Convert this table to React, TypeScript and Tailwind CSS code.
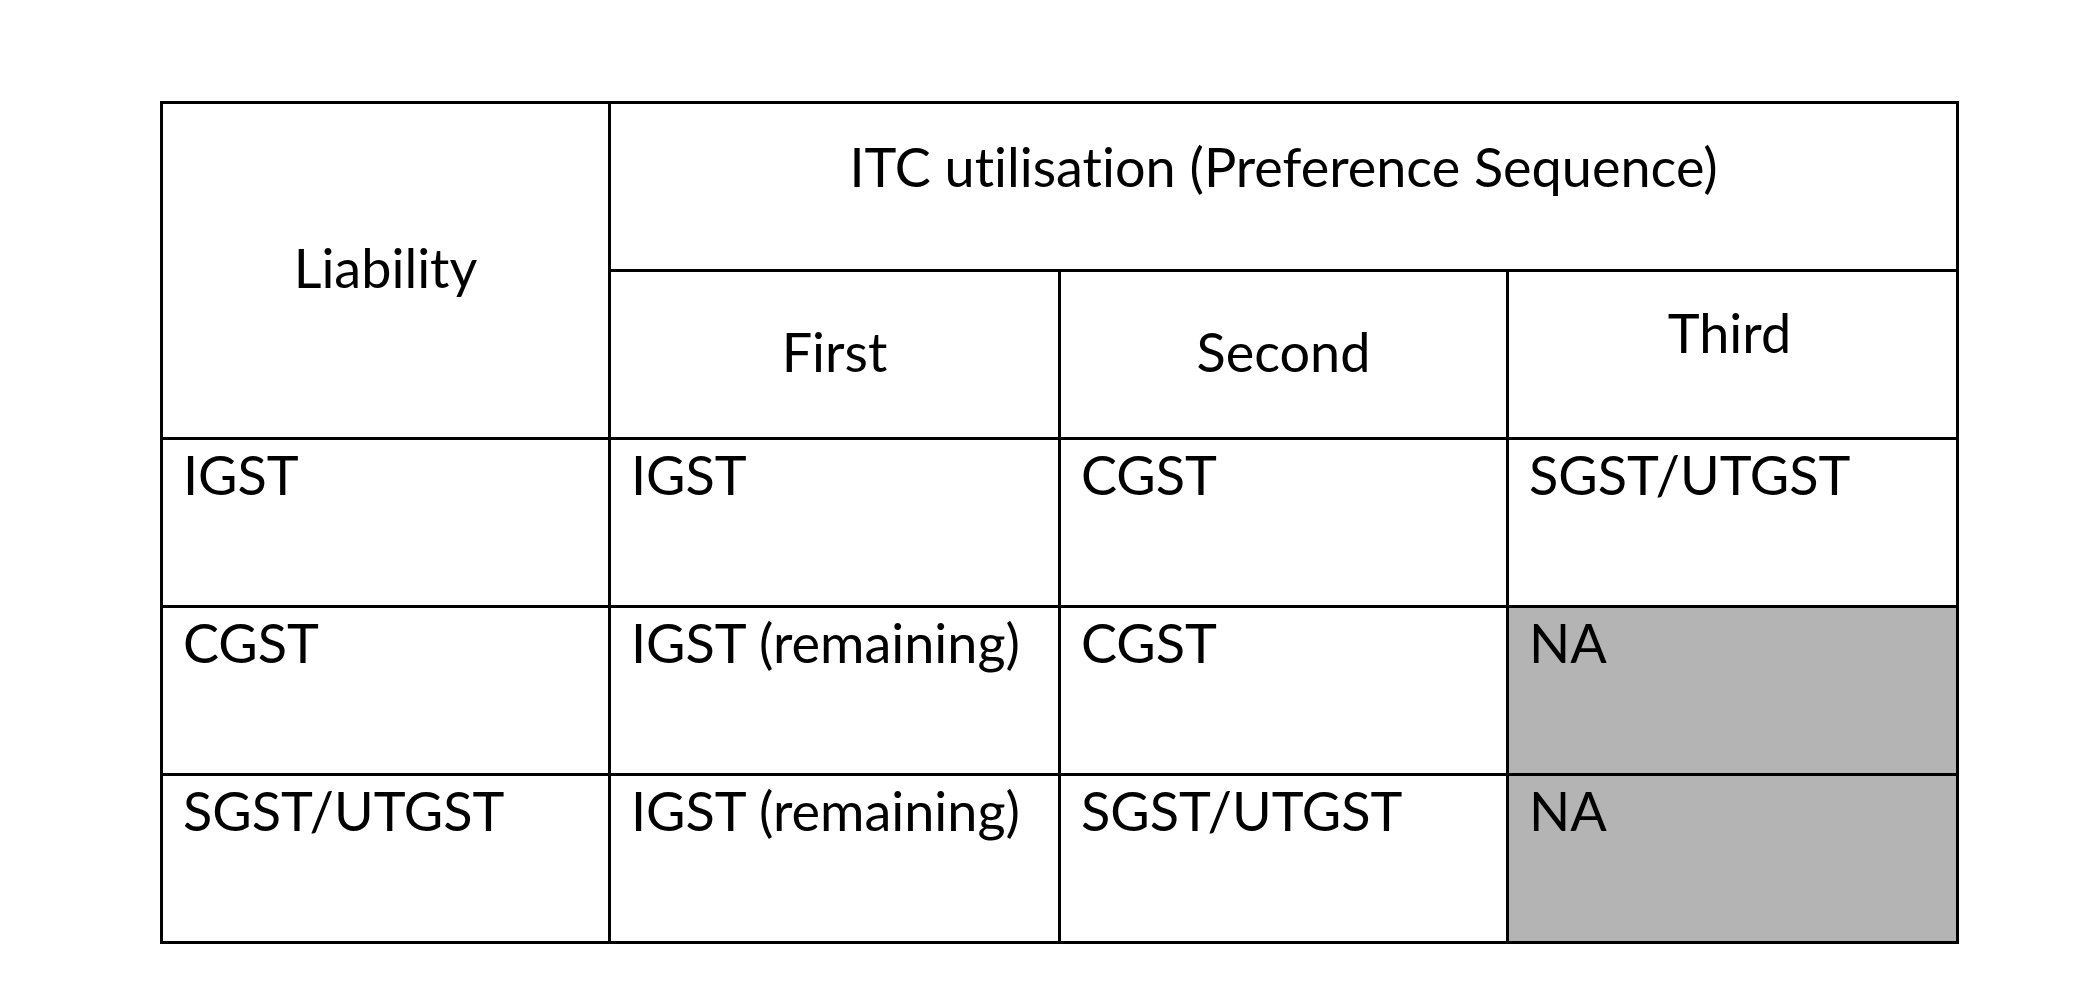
const rows = [
  { liability: "IGST", first: "IGST", second: "CGST", third: "SGST/UTGST", na: false },
  { liability: "CGST", first: "IGST (remaining)", second: "CGST", third: "NA", na: true },
  { liability: "SGST/UTGST", first: "IGST (remaining)", second: "SGST/UTGST", third: "NA", na: true },
];

const edge = "border-[3px] border-black";
const cell = `${edge} h-[168px] align-top pt-2 pl-5 text-left`;

export default function App() {
  return (
    <div className="min-h-screen bg-white pt-[101px] pl-[160px] font-['Lato',sans-serif] text-[54px] leading-none text-black [font-variant-ligatures:none]">
      <table className="table-fixed border-collapse w-[1796px]">
        <colgroup>
          <col className="w-[448px]" />
          <col className="w-[450px]" />
          <col className="w-[448px]" />
          <col className="w-[450px]" />
        </colgroup>
        <thead>
          <tr>
            <th rowSpan={2} className={`${edge} font-normal align-middle pb-[6px]`}>
              Liability
            </th>
            <th colSpan={3} className={`${edge} h-[168px] font-normal align-top pt-[36px]`}>
              ITC utilisation (Preference Sequence)
            </th>
          </tr>
          <tr>
            <th className={`${edge} h-[168px] font-normal align-top pt-[53px]`}>First</th>
            <th className={`${edge} h-[168px] font-normal align-top pt-[53px]`}>Second</th>
            <th className={`${edge} h-[168px] font-normal align-top pt-[34px] pr-[6px]`}>Third</th>
          </tr>
        </thead>
        <tbody>
          {rows.map((r) => (
            <tr key={r.liability}>
              <td className={cell}>{r.liability}</td>
              <td className={cell}>{r.first}</td>
              <td className={cell}>{r.second}</td>
              <td className={`${cell} ${r.na ? "bg-[#b4b4b4]" : ""}`}>{r.third}</td>
            </tr>
          ))}
        </tbody>
      </table>
    </div>
  );
}
